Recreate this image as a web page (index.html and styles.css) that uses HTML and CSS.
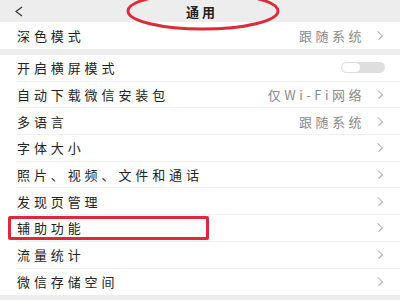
FILE: index.html
```html
<!DOCTYPE html>
<html lang="zh-CN">
<head>
    <meta charset="UTF-8">
    <title>通用</title>
    <link rel="stylesheet" href="styles.css">
</head>
<body>
<div class="page">
    <div class="topbar">
        <svg class="back" width="10" height="11" viewBox="0 0 10 11"><polyline points="8,1 2,5.5 8,10" fill="none" stroke="#333" stroke-width="1.2"/></svg>
        <span class="title">通用</span>
        <svg class="ring" width="156" height="36" viewBox="0 0 156 36"><ellipse cx="78" cy="16" rx="75" ry="18" fill="none" stroke="#dd2a3b" stroke-width="3"/></svg>
    </div>

    <ul class="group first">
        <li class="row"><span class="label">深色模式</span><span class="value">跟随系统</span><i class="arrow"></i></li>
    </ul>

    <ul class="group">
        <li class="row"><span class="label">开启横屏模式</span><span class="switch"><b></b></span></li>
        <li class="row"><span class="label">自动下载微信安装包</span><span class="value">仅Wi-Fi网络</span><i class="arrow"></i></li>
        <li class="row"><span class="label">多语言</span><span class="value">跟随系统</span><i class="arrow"></i></li>
        <li class="row"><span class="label">字体大小</span><i class="arrow"></i></li>
        <li class="row"><span class="label">照片、视频、文件和通话</span><i class="arrow"></i></li>
        <li class="row"><span class="label">发现页管理</span><i class="arrow"></i></li>
        <li class="row marked"><span class="label">辅助功能</span><span class="box"></span><i class="arrow"></i></li>
        <li class="row"><span class="label">流量统计</span><i class="arrow"></i></li>
        <li class="row"><span class="label">微信存储空间</span><i class="arrow"></i></li>
    </ul>
</div>
</body>
</html>
```

FILE: styles.css
```css
*{
    margin: 0;
    padding: 0;
}
li{
    list-style: none;
}
body{
    background-color: #ededed;
    font-family: "Noto Sans CJK SC", "Noto Sans", sans-serif;
    color: #222222;
}
.page{
    width: 400px;
    height: 300px;
    overflow: hidden;
}
.topbar{
    position: relative;
    height: 22px;
    display: flex;
    align-items: center;
    justify-content: center;
}
.back{
    position: absolute;
    left: 14px;
    top: 6px;
}
.title{
    font-size: 13px;
    font-weight: bold;
    letter-spacing: 3px;
    margin-left: 4px;
}
.ring{
    position: absolute;
    left: 125px;
    top: -5px;
}
.group{
    background-color: #ffffff;
    padding-left: 17px;
}
.first{
    margin-bottom: 6px;
}
.first .row{
    height: 27px;
    border-bottom: none;
}
.row{
    position: relative;
    height: 26.7px;
    box-sizing: border-box;
    display: flex;
    align-items: center;
    padding-right: 16px;
    border-bottom: 1px solid #f0f0f0;
    font-size: 13px;
    letter-spacing: 3.9px;
}
.row:last-child{
    border-bottom: none;
}
.label{
    flex: 1;
    white-space: nowrap;
}
.value{
    color: #8a8a8a;
    letter-spacing: 3.5px;
    margin-right: 10px;
}
.arrow{
    width: 6px;
    height: 6px;
    border-top: 1px solid #a6a6a6;
    border-right: 1px solid #a6a6a6;
    transform: rotate(45deg) scaleY(0.8);
    margin-right: 2px;
}
.switch{
    width: 44px;
    height: 11px;
    border-radius: 6px;
    background-color: #dedede;
    display: flex;
    align-items: center;
    margin-right: -1px;
}
.switch b{
    width: 18px;
    height: 9px;
    margin-left: 1px;
    border-radius: 5px;
    background-color: #ffffff;
}
.box{
    position: absolute;
    left: -9px;
    top: 1px;
    width: 201px;
    height: 24px;
    box-sizing: border-box;
    border: 3px solid #e0283c;
    border-radius: 2px;
}
```
